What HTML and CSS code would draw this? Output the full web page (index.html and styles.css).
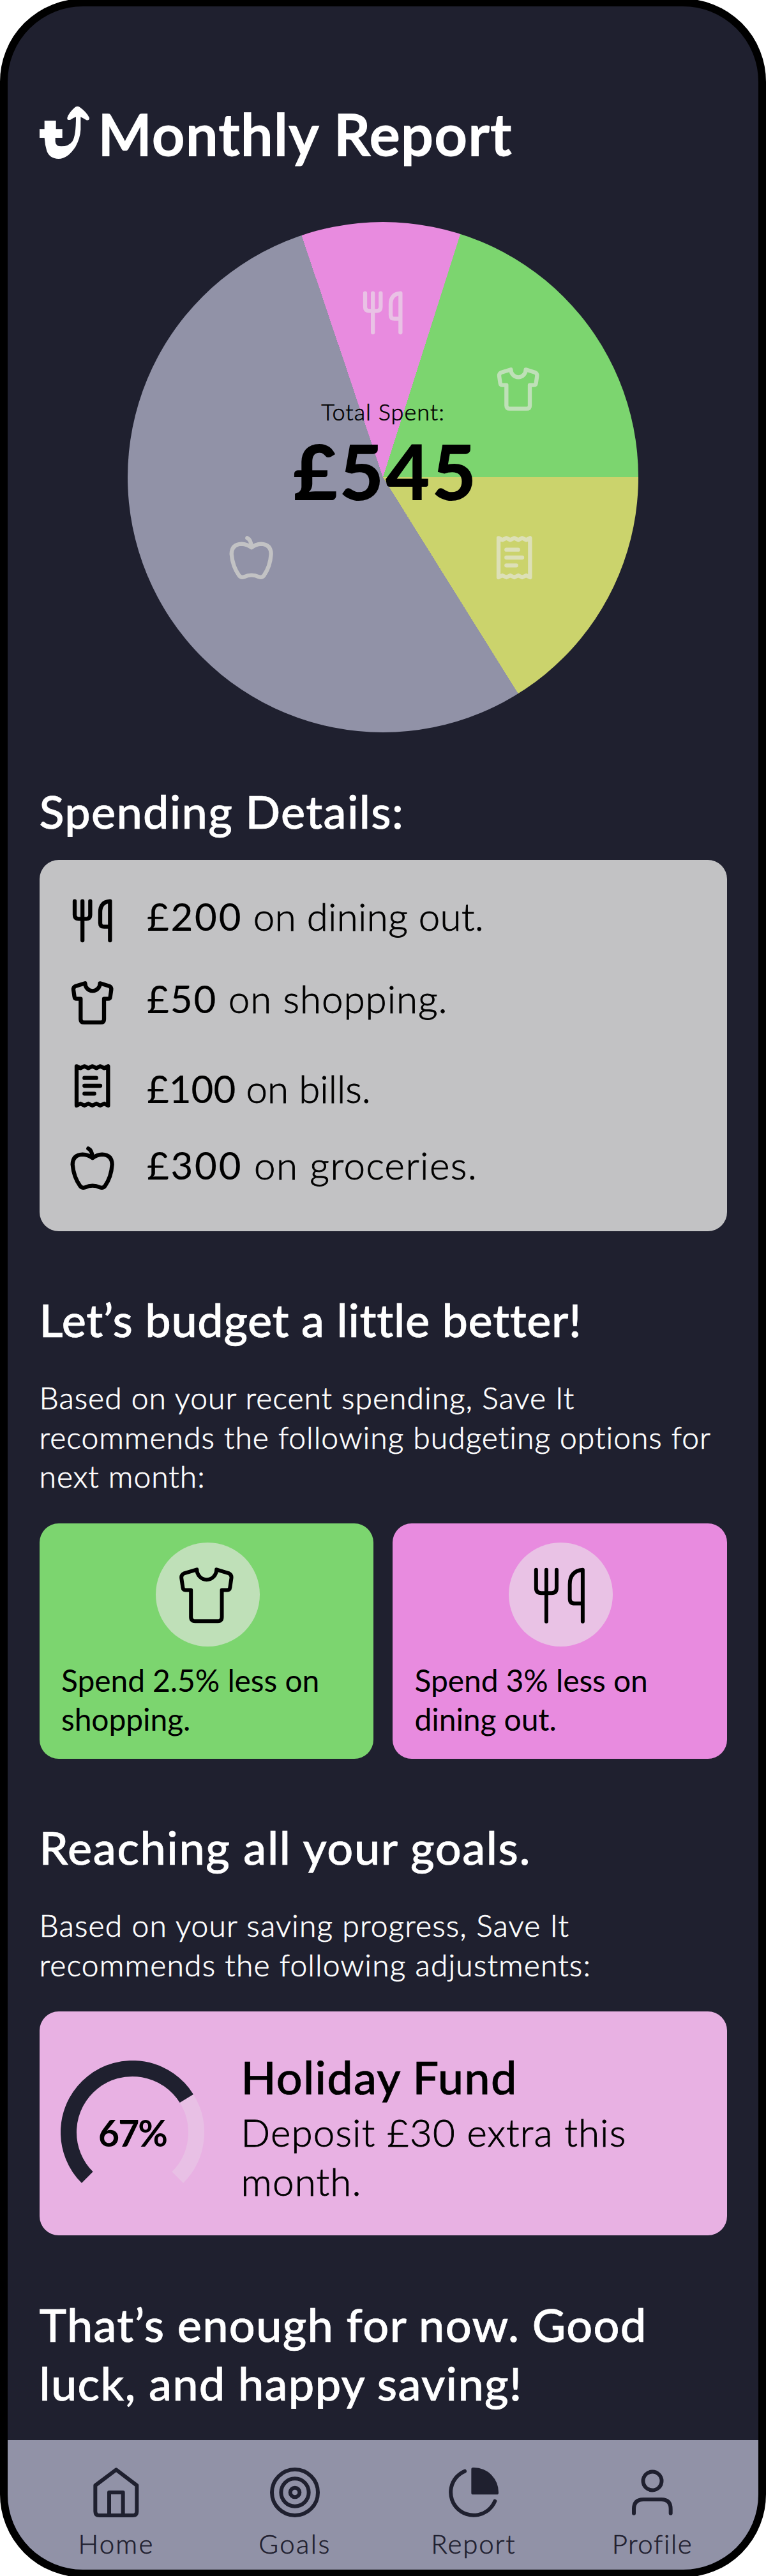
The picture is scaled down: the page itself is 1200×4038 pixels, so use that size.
FILE: index.html
```html
<!DOCTYPE html>
<html lang="en">
<head>
<meta charset="utf-8">
<title>Monthly Report</title>
<link rel="stylesheet" href="styles.css">
</head>
<body>
<svg class="sprite" aria-hidden="true">
  <symbol id="dining" viewBox="45 69 240 240"><path d="M81 98V163Q81 181 99 181H136Q154 181 154 163V98M117.500 98V282M247 282V98Q201 102 201 150V200Q201 218 219 218H247"/></symbol>
  <symbol id="shirt" viewBox="45 458 240 240"><path d="M130 486A35 36 0 0 0 200 486L243 499Q254 504 253 516L248 550Q247 559 238 559H219V655Q219 670 204 670H125Q109 670 109 655V559H90Q81 559 80 550L75 516Q74 504 86 499Z"/></symbol>
  <symbol id="receipt" viewBox="45 845 240 240"><path d="M90 873L108 882L127 873L145 882L164 873L183 882L201 873L220 882L238 873V1058L220 1049L201 1058L183 1049L164 1058L145 1049L127 1058L108 1049L90 1058ZM127 928H182M127 965H201M127 1002H173"/></symbol>
  <symbol id="apple" viewBox="45 1232 240 240"><path d="M145 1260Q163 1268 165 1303M165 1305Q145 1289 118 1288Q72 1290 71 1335Q76 1395 107 1437Q116 1448 130 1443Q165 1427 200 1443Q214 1448 223 1437Q253 1395 257 1335Q256 1290 210 1288Q185 1289 165 1305Z"/></symbol>
</svg>

<div class="screen">
<div class="phone">
  <main class="content">
    <header class="header">
      <svg class="logo" viewBox="63 78 234 249"><path d="M86 148H140V187H170V228H137V245Q138 268 165 268Q200 268 217 245Q234 220 234 130Q222 134 208 143Q192 148 193 134Q200 110 230 84Q241 76 252 84Q285 108 297 134Q298 148 283 145Q268 136 256 130V190Q254 230 232 270Q195 327 152 327Q110 325 97 290Q88 262 86 228H63V187H86Z"/></svg>
      <h1 class="title">Monthly Report</h1>
    </header>

    <section class="chart">
      <svg class="icon slice-dining"><use href="#dining"/></svg>
      <svg class="icon slice-shirt"><use href="#shirt"/></svg>
      <svg class="icon slice-receipt"><use href="#receipt"/></svg>
      <svg class="icon slice-apple"><use href="#apple"/></svg>
      <div class="total">
        <span class="total-label">Total Spent:</span>
        <strong class="total-value">£545</strong>
      </div>
    </section>

    <h2 class="heading heading-details">Spending Details:</h2>
    <ul class="details">
      <li class="row"><svg class="icon"><use href="#dining"/></svg><p class="row-text dining-text"><b>£200</b> on dining out.</p></li>
      <li class="row"><svg class="icon"><use href="#shirt"/></svg><p class="row-text shopping-text"><b>£50</b> on shopping.</p></li>
      <li class="row"><svg class="icon"><use href="#receipt"/></svg><p class="row-text bills-text"><b>£100</b> on bills.</p></li>
      <li class="row"><svg class="icon"><use href="#apple"/></svg><p class="row-text groceries-text"><b>£300</b> on groceries.</p></li>
    </ul>

    <h2 class="heading heading-budget">Let’s budget a little better!</h2>
    <p class="intro">Based on your recent spending, Save It<br>recommends the following budgeting options for<br>next month:</p>
    <div class="tips">
      <article class="tip tip-shopping">
        <div class="badge"><svg class="icon icon-large"><use href="#shirt"/></svg></div>
        <p class="tip-text">Spend 2.5% less on<br>shopping.</p>
      </article>
      <article class="tip tip-dining">
        <div class="badge"><svg class="icon icon-large"><use href="#dining"/></svg></div>
        <p class="tip-text">Spend 3% less on<br>dining out.</p>
      </article>
    </div>

    <h2 class="heading heading-goals">Reaching all your goals.</h2>
    <p class="intro intro-goals">Based on your saving progress, Save It<br>recommends the following adjustments:</p>
    <article class="goal">
      <div class="gauge">
        <svg class="gauge-ring" viewBox="0 0 225 225">
          <path class="gauge-rest" d="M197.300 59.500A100 100 0 0 1 183.200 183.200"/>
          <path class="gauge-done" d="M41.800 183.200A100 100 0 1 1 197.300 59.500"/>
        </svg>
        <strong class="gauge-value">67%</strong>
      </div>
      <div class="goal-body">
        <h3 class="goal-title">Holiday Fund</h3>
        <p class="goal-text">Deposit £30 extra this<br>month.</p>
      </div>
    </article>

    <h2 class="heading heading-end">That’s enough for now. Good<br>luck, and happy saving!</h2>
  </main>

  <nav class="nav">
    <a class="nav-item"><svg class="nav-icon" viewBox="65 52 240 240"><path d="M87 139L185 65L282 139V261Q282 280 263 280H106Q87 280 87 261ZM152 280V172H217V280"/></svg><span class="nav-label label-home">Home</span></a>
    <a class="nav-item"><svg class="nav-icon" viewBox="905 52 240 240"><circle cx="1025" cy="172" r="108"/><circle cx="1025" cy="172" r="65"/><circle cx="1025" cy="172" r="22"/></svg><span class="nav-label label-goals">Goals</span></a>
    <a class="nav-item"><svg class="nav-icon" viewBox="65 52 240 240"><path d="M143 72A108 108 0 1 0 285 213"/><path class="wedge" d="M182 55H186A116 116 0 0 1 302 174Q302 182 294 182H182Q174 182 174 174V63Q174 55 182 55Z"/></svg><span class="nav-label label-report">Report</span></a>
    <a class="nav-item"><svg class="nav-icon" viewBox="905 52 240 240"><circle cx="1025" cy="118" r="43.500"/><path d="M938 270V250Q938 205 983 205H1067Q1111 205 1111 250V270"/></svg><span class="nav-label label-profile">Profile</span></a>
  </nav>
</div>
</div>
</body>
</html>
```
FILE: styles.css
```css
* { box-sizing: border-box; margin: 0; padding: 0; }

body { background: #fff; font-family: "Lato", "Liberation Sans", sans-serif; color: #000; }

.sprite { display: none; }

.screen { height: 4038px; overflow: hidden; display: flow-root; }

.phone {
  display: flex;
  flex-direction: column;
  height: 4041.5px;
  margin-top: -2px;
  overflow: hidden;
  border: 12px solid #000;
  border-radius: 130px;
  background: #1f202f;
}

.content { padding: 143px 49.5px 0; }

.icon {
  display: block;
  width: 80px;
  height: 80px;
  fill: none;
  stroke: #000;
  stroke-width: 19;
  stroke-linecap: round;
  stroke-linejoin: round;
}

.header { display: flex; align-items: flex-start; gap: 14px; }
.logo { width: 78px; height: 83px; margin-top: 13px; fill: #fff; }
.title { font-size: 90px; line-height: 112px; font-weight: 600; letter-spacing: 1.6px; color: #fff; white-space: nowrap; -webkit-text-stroke: 1.8px; }

.chart {
  position: relative;
  width: 800px;
  height: 800px;
  margin: 83px auto 0;
  padding-top: 274px;
  border-radius: 50%;
  background: conic-gradient(from -18.6deg, #e88bdf 36.2deg, #7cd56f 36.25deg 108.6deg, #cbd36c 108.65deg 166.6deg, #9192a7 166.65deg);
}
.chart .icon { position: absolute; }
.slice-dining { left: 360px; top: 102px; stroke: #e9c2e5; }
.slice-shirt { left: 572px; top: 222px; stroke: #bfe0b8; }
.slice-receipt { left: 566px; top: 486px; stroke: #dde0b7; }
.slice-apple { left: 153.500px; top: 486px; stroke: #c2c2c4; }

.total { position: relative; display: flex; flex-direction: column; align-items: center; }
.total-label { font-size: 36px; line-height: 46px; font-weight: 300; letter-spacing: 1px; -webkit-text-stroke: .6px; }
.total-value { padding-left: 8px; font-size: 120px; line-height: 140px; font-weight: 900; letter-spacing: 2.9px; }

.heading { font-size: 72px; line-height: 92px; font-weight: 500; color: #fff; white-space: nowrap; -webkit-text-stroke: .7px; }
.heading-details { margin-top: 77px; margin-bottom: -.5px; letter-spacing: 1.3px; }
.heading-budget { margin-top: 92.6px; letter-spacing: .65px; }
.heading-goals { margin-top: 92.1px; letter-spacing: 1.6px; }
.heading-end { margin-top: 92.2px; letter-spacing: 1.3px; }

.details {
  height: 582px;
  margin-top: 31px;
  padding: 31px 43.5px 0;
  border-radius: 30px;
  background: #c2c2c4;
  list-style: none;
}
.row { display: flex; align-items: center; gap: 45px; height: 129.3px; }
.row-text { font-size: 60px; line-height: 76px; font-weight: 300; -webkit-text-stroke: .9px; }
.row-text b { font-weight: 400; letter-spacing: 2.75px; -webkit-text-stroke: .2px; }
.dining-text { margin-bottom: 14px; letter-spacing: .35px; }
.shopping-text { margin-bottom: 15px; letter-spacing: 1px; }
.shopping-text b { letter-spacing: 2px; }
.bills-text { margin-top: 8.6px; }
.bills-text b { letter-spacing: 0; }
.groceries-text { margin-bottom: 9.4px; letter-spacing: 1.5px; }

.intro { margin-top: 46.2px; font-size: 48px; line-height: 61.4px; font-weight: 300; letter-spacing: 1.02px; color: #fff; white-space: nowrap; -webkit-text-stroke: .7px; }
.intro-goals { letter-spacing: 1.15px; }

.tips { display: grid; grid-template-columns: 1fr 1fr; gap: 30px; margin-top: 43.1px; }
.tip { height: 369.4px; padding: 30px 0 0 34.5px; border-radius: 30px; }
.tip-shopping { background: #7cd56f; }
.tip-dining { background: #e88bdf; }
.badge { display: flex; justify-content: center; align-items: center; width: 163px; height: 163px; margin-left: 147.5px; padding: 4px 3px 0 0; border-radius: 50%; }
.tip-shopping .badge { background: #bfe0b8; }
.tip-dining .badge { background: #e9c2e5; }
.icon-large { width: 105.6px; height: 105.6px; flex: none; stroke-width: 13.6; }
.tip-text { margin-top: 22px; font-size: 48px; line-height: 61.4px; font-weight: 400; letter-spacing: -.1px; white-space: nowrap; }

.goal {
  display: flex;
  align-items: flex-start;
  gap: 57.6px;
  height: 351.2px;
  margin-top: 43.2px;
  padding-left: 33.5px;
  border-radius: 30px;
  background: #e8b1e3;
}
.gauge { display: grid; place-items: center; width: 225px; height: 225px; margin-top: 77px; }
.gauge-ring, .gauge-value { grid-area: 1 / 1; }
.gauge-ring { width: 225px; height: 225px; fill: none; stroke-width: 25; }
.gauge-done { stroke: #1f202f; }
.gauge-rest { stroke: #e8c0e5; }
.gauge-value { font-size: 57px; line-height: 70px; font-weight: 700; letter-spacing: -2px; }
.goal-body { padding-top: 55.7px; white-space: nowrap; }
.goal-title { font-size: 72px; line-height: 92px; font-weight: 500; letter-spacing: 1.25px; -webkit-text-stroke: .7px; }
.goal-text { margin-top: 3.2px; font-size: 60px; line-height: 77px; font-weight: 300; letter-spacing: 1.2px; -webkit-text-stroke: .9px; }

.nav {
  display: grid;
  grid-template-columns: repeat(4, 280px);
  height: 203px;
  margin-top: auto;
  flex: none;
  padding: 42.8px 0 0 30px;
  background: #9192a7;
  color: #1f202f;
}
.nav-item { display: flex; flex-direction: column; align-items: center; }
.nav-icon { width: 80px; height: 80px; fill: none; stroke: #1f202f; stroke-width: 18; stroke-linecap: round; stroke-linejoin: round; }
.nav-icon .wedge { fill: #1f202f; stroke: none; }
.nav-label { margin-top: 14.3px; font-size: 42px; line-height: 50px; font-weight: 300; -webkit-text-stroke: .6px; }
.label-home { letter-spacing: 2.2px; }
.label-goals { letter-spacing: 2.4px; }
.label-report { letter-spacing: 1.9px; }
.label-profile { letter-spacing: 1.6px; }
```
